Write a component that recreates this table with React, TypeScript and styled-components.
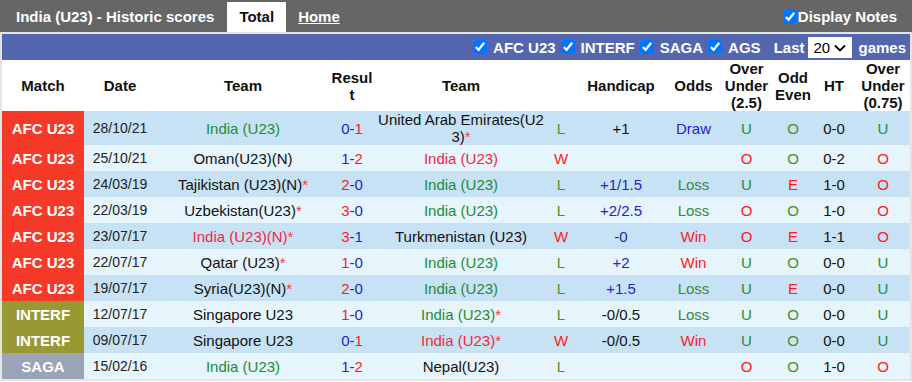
import React from 'react';
import styled, { createGlobalStyle } from 'styled-components';

const GlobalStyle = createGlobalStyle`
  body {
    margin: 0;
    background: #fff;
    font-family: "Liberation Sans", Arial, sans-serif;
  }
`;

const colors = {
  green: '#1e8c32',
  red: '#f0283c',
  black: '#111',
  blue: '#2323cc',
  olive: '#5a8c14',
  loss: '#3d8a3d',
  ou: '#2a8a3a',
  oe: '#4c8c1c',
  hot: '#ff1a1a',
};

type Tone = keyof typeof colors;

const leagueBg: Record<string, string> = {
  'AFC U23': '#f53a2a',
  INTERF: '#999933',
  SAGA: '#9aa4b6',
};

type Team = { name: string; tone: Tone; star?: boolean };

type Game = {
  league: string;
  date: string;
  home: Team;
  hs: number;
  as: number;
  away: Team;
  wl: 'W' | 'L';
  hcap: string;
  hcapTone: Tone;
  odds: '' | 'Win' | 'Loss' | 'Draw';
  ou: 'U' | 'O';
  oe: 'O' | 'E';
  ht: string;
  ou2: 'U' | 'O';
};

const india = (tone: Tone, star = false): Team => ({ name: 'India (U23)', tone, star });

const games: Game[] = [
  { league: 'AFC U23', date: '28/10/21', home: india('green'), hs: 0, as: 1, away: { name: 'United Arab Emirates(U23)', tone: 'black', star: true }, wl: 'L', hcap: '+1', hcapTone: 'black', odds: 'Draw', ou: 'U', oe: 'O', ht: '0-0', ou2: 'U' },
  { league: 'AFC U23', date: '25/10/21', home: { name: 'Oman(U23)(N)', tone: 'black' }, hs: 1, as: 2, away: india('red'), wl: 'W', hcap: '', hcapTone: 'black', odds: '', ou: 'O', oe: 'O', ht: '0-2', ou2: 'O' },
  { league: 'AFC U23', date: '24/03/19', home: { name: 'Tajikistan (U23)(N)', tone: 'black', star: true }, hs: 2, as: 0, away: india('green'), wl: 'L', hcap: '+1/1.5', hcapTone: 'blue', odds: 'Loss', ou: 'U', oe: 'E', ht: '1-0', ou2: 'O' },
  { league: 'AFC U23', date: '22/03/19', home: { name: 'Uzbekistan(U23)', tone: 'black', star: true }, hs: 3, as: 0, away: india('green'), wl: 'L', hcap: '+2/2.5', hcapTone: 'blue', odds: 'Loss', ou: 'O', oe: 'O', ht: '1-0', ou2: 'O' },
  { league: 'AFC U23', date: '23/07/17', home: { name: 'India (U23)(N)', tone: 'red', star: true }, hs: 3, as: 1, away: { name: 'Turkmenistan (U23)', tone: 'black' }, wl: 'W', hcap: '-0', hcapTone: 'blue', odds: 'Win', ou: 'O', oe: 'E', ht: '1-1', ou2: 'O' },
  { league: 'AFC U23', date: '22/07/17', home: { name: 'Qatar (U23)', tone: 'black', star: true }, hs: 1, as: 0, away: india('green'), wl: 'L', hcap: '+2', hcapTone: 'blue', odds: 'Win', ou: 'U', oe: 'O', ht: '0-0', ou2: 'U' },
  { league: 'AFC U23', date: '19/07/17', home: { name: 'Syria(U23)(N)', tone: 'black', star: true }, hs: 2, as: 0, away: india('green'), wl: 'L', hcap: '+1.5', hcapTone: 'blue', odds: 'Loss', ou: 'U', oe: 'E', ht: '0-0', ou2: 'U' },
  { league: 'INTERF', date: '12/07/17', home: { name: 'Singapore U23', tone: 'black' }, hs: 1, as: 0, away: india('green', true), wl: 'L', hcap: '-0/0.5', hcapTone: 'black', odds: 'Loss', ou: 'U', oe: 'O', ht: '0-0', ou2: 'U' },
  { league: 'INTERF', date: '09/07/17', home: { name: 'Singapore U23', tone: 'black' }, hs: 0, as: 1, away: india('red', true), wl: 'W', hcap: '-0/0.5', hcapTone: 'black', odds: 'Win', ou: 'U', oe: 'O', ht: '0-0', ou2: 'U' },
  { league: 'SAGA', date: '15/02/16', home: india('green'), hs: 1, as: 2, away: { name: 'Nepal(U23)', tone: 'black' }, wl: 'L', hcap: '', hcapTone: 'black', odds: '', ou: 'O', oe: 'O', ht: '1-0', ou2: 'O' },
];

const widths = [82, 72, 174, 44, 174, 26, 94, 51, 55, 38, 44, 54];

const Page = styled.div`
  width: 912px;
  font-size: 15px;
  color: #111;
`;

const TopBar = styled.div`
  display: flex;
  align-items: stretch;
  height: 30px;
  padding: 2px 15px 0 16px;
  background: #666;
  color: #fff;
  font-weight: bold;
  line-height: 30px;
`;

const Title = styled.div`
  margin-right: 13px;
`;

const Tab = styled.div<{ $active?: boolean }>`
  padding: 0 12px;
  background: ${p => (p.$active ? '#fff' : 'transparent')};
  color: ${p => (p.$active ? '#111' : '#fff')};
  text-decoration: ${p => (p.$active ? 'none' : 'underline')};
  cursor: pointer;
`;

const Spacer = styled.div`
  flex: 1;
`;

const Notes = styled.label`
  display: flex;
  align-items: center;
`;

const Check = styled.input.attrs({ type: 'checkbox', readOnly: true, checked: true })`
  width: 14px;
  height: 14px;
  margin: 0 1px 0 0;
  accent-color: #0075ff;
`;

const Frame = styled.div`
  border: 2px solid #e4e4e4;
`;

const FilterBar = styled.div`
  display: flex;
  justify-content: flex-end;
  align-items: center;
  height: 26px;
  padding-right: 4px;
  background: #5366ae;
  color: #fff;
  font-weight: bold;
`;

const Filter = styled.label`
  display: flex;
  align-items: center;
  margin-left: 5px;

  input {
    margin-right: 6px;
  }
`;

const Last = styled.span`
  margin-left: 13px;
`;

const SelectWrap = styled.span`
  position: relative;
  display: inline-block;
  margin: 0 6px 0 4px;
`;

const Select = styled.select`
  appearance: none;
  width: 44px;
  height: 21px;
  padding: 0 0 0 5px;
  border: none;
  background: #fff;
  color: #000;
  font: 15px "Liberation Sans", Arial, sans-serif;
`;

const Chevron = styled.svg`
  position: absolute;
  right: 6px;
  top: 7px;
  pointer-events: none;
`;

const Table = styled.table`
  width: 908px;
  border-collapse: collapse;
  table-layout: fixed;
  line-height: 17px;
`;

const Col = styled.col<{ $w: number }>`
  width: ${p => p.$w}px;
`;

const Th = styled.th<{ $break?: boolean }>`
  padding: 0;
  background: #fff;
  font-weight: bold;
  text-align: center;
  vertical-align: middle;
  word-break: ${p => (p.$break ? 'break-all' : 'normal')};
`;

const Row = styled.tr<{ $dark: boolean }>`
  height: 26px;
  background: ${p => (p.$dark ? '#c8e2f5' : '#e6f4fc')};
`;

const Td = styled.td`
  padding: 0;
  text-align: center;
  vertical-align: middle;
  white-space: nowrap;
`;

const League = styled(Td)<{ $bg: string }>`
  background: ${p => p.$bg};
  color: #fff;
  font-weight: bold;
`;

const DateCell = styled(Td)`
  font-size: 14px;
  color: #222;
`;

const TeamCell = styled(Td)`
  padding: 0 2px;
  white-space: normal;
  word-break: break-all;
`;

const Tint = styled.span<{ $tone: Tone }>`
  color: ${p => colors[p.$tone]};
`;

const Star = styled.span`
  color: #f03c3c;
`;

const TeamName = ({ team }: { team: Team }) => (
  <>
    <Tint $tone={team.tone}>{team.name}</Tint>
    {team.star && <Star>*</Star>}
  </>
);

const Score = ({ hs, as }: { hs: number; as: number }) => (
  <Tint $tone="blue">
    <Tint $tone={hs > as ? 'hot' : 'blue'}>{hs}</Tint>-<Tint $tone={as > hs ? 'hot' : 'blue'}>{as}</Tint>
  </Tint>
);

const oddsTone: Record<string, Tone> = { Win: 'hot', Loss: 'loss', Draw: 'blue', '': 'black' };

const App = () => (
  <Page>
    <GlobalStyle />
    <TopBar>
      <Title>India (U23) - Historic scores</Title>
      <Tab $active>Total</Tab>
      <Tab>Home</Tab>
      <Spacer />
      <Notes>
        <Check />
        Display Notes
      </Notes>
    </TopBar>
    <Frame>
      <FilterBar>
        {['AFC U23', 'INTERF', 'SAGA', 'AGS'].map(f => (
          <Filter key={f}>
            <Check />
            {f}
          </Filter>
        ))}
        <Last>Last</Last>
        <SelectWrap>
          <Select defaultValue="20">
            <option value="10">10</option>
            <option value="20">20</option>
            <option value="30">30</option>
          </Select>
          <Chevron width="12" height="8" viewBox="0 0 12 8">
            <path d="M1 1.5 6 6.5 11 1.5" fill="none" stroke="#000" strokeWidth="1.8" />
          </Chevron>
        </SelectWrap>
        games
      </FilterBar>
      <Table>
        <colgroup>
          {widths.map((w, i) => (
            <Col key={i} $w={w} />
          ))}
        </colgroup>
        <thead>
          <tr>
            <Th>Match</Th>
            <Th>Date</Th>
            <Th>Team</Th>
            <Th $break>Result</Th>
            <Th>Team</Th>
            <Th />
            <Th>Handicap</Th>
            <Th>Odds</Th>
            <Th>Over Under (2.5)</Th>
            <Th>Odd Even</Th>
            <Th>HT</Th>
            <Th>Over Under (0.75)</Th>
          </tr>
        </thead>
        <tbody>
          {games.map((g, i) => (
            <Row key={i} $dark={i % 2 === 0}>
              <League $bg={leagueBg[g.league]}>{g.league}</League>
              <DateCell>{g.date}</DateCell>
              <TeamCell>
                <TeamName team={g.home} />
              </TeamCell>
              <Td>
                <Score hs={g.hs} as={g.as} />
              </Td>
              <TeamCell>
                <TeamName team={g.away} />
              </TeamCell>
              <Td>
                <Tint $tone={g.wl === 'W' ? 'hot' : 'olive'}>{g.wl}</Tint>
              </Td>
              <Td>
                <Tint $tone={g.hcapTone}>{g.hcap}</Tint>
              </Td>
              <Td>
                <Tint $tone={oddsTone[g.odds]}>{g.odds}</Tint>
              </Td>
              <Td>
                <Tint $tone={g.ou === 'U' ? 'ou' : 'hot'}>{g.ou}</Tint>
              </Td>
              <Td>
                <Tint $tone={g.oe === 'O' ? 'oe' : 'hot'}>{g.oe}</Tint>
              </Td>
              <Td>{g.ht}</Td>
              <Td>
                <Tint $tone={g.ou2 === 'U' ? 'ou' : 'hot'}>{g.ou2}</Tint>
              </Td>
            </Row>
          ))}
        </tbody>
      </Table>
    </Frame>
  </Page>
);

export default App;
